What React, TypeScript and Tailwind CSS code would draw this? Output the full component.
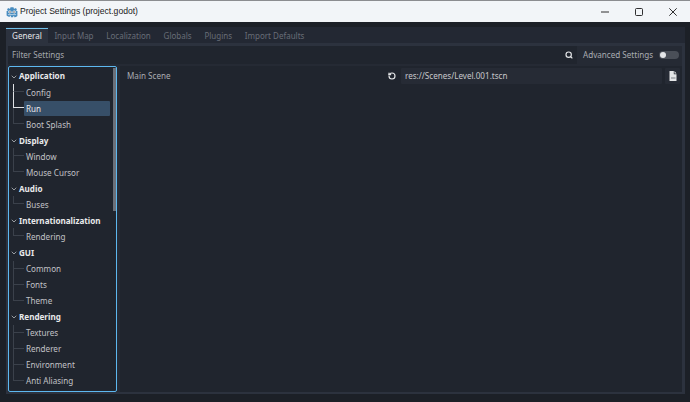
import { Search, RotateCcw, ChevronDown } from "lucide-react";

const font = { fontFamily: '"Noto Sans", sans-serif' };

const tabs = ["Input Map", "Localization", "Globals", "Plugins", "Import Defaults"];

type Row = { label: string; head?: boolean; branch?: "mid" | "end"; last?: boolean };

const rows: Row[] = [
  { label: "Application", head: true },
  { label: "Config", branch: "mid" },
  { label: "Run", branch: "end" },
  { label: "Boot Splash", last: true },
  { label: "Display", head: true },
  { label: "Window" },
  { label: "Mouse Cursor", last: true },
  { label: "Audio", head: true },
  { label: "Buses", last: true },
  { label: "Internationalization", head: true },
  { label: "Rendering", last: true },
  { label: "GUI", head: true },
  { label: "Common" },
  { label: "Fonts" },
  { label: "Theme", last: true },
  { label: "Rendering", head: true },
  { label: "Textures" },
  { label: "Renderer" },
  { label: "Environment" },
  { label: "Anti Aliasing", last: true },
];

const GodotLogo = () => (
  <svg width="12" height="12" viewBox="0 0 16 16">
    <path
      d="M6 1.500 5.600 3.200 4.400 3.600 3 2.600 1.400 4.200l.9 1.300-.3 1H.8v6.100c1 1.200 3 1.900 4.200 1.900v-1.600h1.500V15h3v-1.500H11v1.600c1.200 0 3.200-.7 4.200-1.900V6.500H14l-.3-1 .9-1.300L13 2.600l-1.400 1-1.200-.4L10 1.500Z"
      fill="#478cbf"
    />
    <circle cx="5" cy="8" r="1.900" fill="#fff" />
    <circle cx="11" cy="8" r="1.900" fill="#fff" />
    <circle cx="5.300" cy="8.100" r="1" fill="#414042" />
    <circle cx="10.700" cy="8.100" r="1" fill="#414042" />
    <rect x="7.300" y="7" width="1.400" height="2.400" rx="0.700" fill="#fff" />
    <path d="M2.500 11.500h11" stroke="#fff" strokeWidth="0.800" />
  </svg>
);

const MinimizeIcon = () => (
  <svg width="8" height="8" viewBox="0 0 8 8">
    <path d="M0 4h8" stroke="#1a1a1a" strokeWidth="0.900" />
  </svg>
);

const MaximizeIcon = () => (
  <svg width="8" height="8" viewBox="0 0 8 8" fill="none">
    <rect x="0.500" y="0.500" width="7" height="7" rx="1" stroke="#1a1a1a" strokeWidth="0.900" />
  </svg>
);

const CloseIcon = () => (
  <svg width="8" height="8" viewBox="0 0 8 8">
    <path d="M.3.300l7.400 7.400M7.700.300.3 7.700" stroke="#1a1a1a" strokeWidth="0.900" />
  </svg>
);

const FileIcon = () => (
  <svg width="8" height="10" viewBox="0 0 8 10">
    <path d="M.5 0H4.800v3.200H7.500V10h-7Z" fill="#e4e6e8" />
    <path d="M5.500 0l2 2.400h-2Z" fill="#e4e6e8" />
    <rect x="2" y="6.500" width="4.500" height="1" fill="#7d8087" />
  </svg>
);

const Connector = ({ row }: { row: Row }) => {
  const bright = "border-[#dfe1e4]";
  const faint = "border-[#3b414b]";
  return (
    <div className="flex h-full w-[11px] shrink-0 flex-col">
      <div
        className={`h-1/2 border-l ${row.branch ? bright : faint} border-b ${
          row.branch === "end" ? "border-b-[#dfe1e4]" : "border-b-[#3b414b]"
        }`}
      />
      {!row.last && <div className={`h-1/2 border-l ${row.branch === "mid" ? bright : faint}`} />}
    </div>
  );
};

export default function App() {
  return (
    <div style={font} className="flex h-[402px] w-[690px] flex-col overflow-hidden bg-[#1c2027] text-[8.100px] leading-none">
      <div className="flex h-[22px] shrink-0 items-center border-t border-[#8b8d90] bg-[#f2f5f8] pl-[6px]">
        <GodotLogo />
        <span className="ml-[2px] font-['Liberation_Sans',sans-serif] text-[8.600px] text-[#1a1a1a]">
          Project Settings (project.godot)
        </span>
        <div className="ml-auto flex items-center">
          <MinimizeIcon />
          <div className="w-[26px]" />
          <MaximizeIcon />
          <div className="w-[26px]" />
          <CloseIcon />
          <div className="w-[13px]" />
        </div>
      </div>

      <div className="flex min-h-0 flex-1 flex-col pb-[8px] pl-[6px] pr-[5px] pt-[5px]">
        <div className="flex h-[16px] shrink-0 items-stretch bg-[#232833] pt-[1px]">
          <div className="flex w-[42px] items-center justify-center border-t border-[#70bfe8] bg-[#2c323e] text-[#e6e7e9]">
            General
          </div>
          {tabs.map((t) => (
            <div key={t} className="flex items-center px-[6.400px] text-[8px] text-[#686d77]">
              {t}
            </div>
          ))}
        </div>

        <div className="flex min-h-0 flex-1 flex-col gap-[2px] border-b-2 border-l-2 border-r-[3px] border-t-[3px] border-[#2c323e] bg-[#252a34]">
          <div className="flex h-[18px] shrink-0 items-center">
            <div className="flex h-full w-[569px] items-center bg-[#20252e] pl-[4px] pr-[4px] text-[#a4a7ac]">
              Filter Settings
              <Search size={8} strokeWidth={3.500} className="ml-auto text-[#e4e6e8]" />
            </div>
            <span className="ml-[6px] whitespace-nowrap text-[#a9acb1]">Advanced Settings</span>
            <div className="ml-[6px] flex h-[8px] w-[20px] items-center rounded-full bg-[#4a4f58] pl-[1px]">
              <div className="h-[6px] w-[6px] rounded-full bg-[#e4e6e8]" />
            </div>
          </div>

          <div className="flex min-h-0 flex-1 gap-[3px]">
            <div className="flex w-[109px] shrink-0 rounded-[2px] border border-[#5db8f0] bg-[#20252e] py-[1px] pl-[1px]">
              <div className="min-w-0 flex-1">
                {rows.map((r, i) =>
                  r.head ? (
                    <div key={i} className="flex h-[16.050px] items-center pt-[1px] font-bold text-[#e8e9eb]">
                      <ChevronDown size={8} strokeWidth={2.500} className="mr-[1px] text-[#b0b3b8]" />
                      {r.label}
                    </div>
                  ) : (
                    <div key={i} className="flex h-[16.050px] items-center pl-[3px] text-[#c0c2c6]">
                      <Connector row={r} />
                      {r.branch === "end" ? (
                        <div className="mr-[3px] flex h-[15px] flex-1 items-center rounded-[1px] bg-[#374f68] pl-[2px] pt-[1px] text-[#e8e9eb]">
                          {r.label}
                        </div>
                      ) : (
                        <span className="pl-[2px] pt-[1px]">{r.label}</span>
                      )}
                    </div>
                  )
                )}
              </div>
              <div className="w-[3px] shrink-0">
                <div className="h-[143px] bg-[#6b7079]" />
              </div>
            </div>

            <div className="min-w-0 flex-1 bg-[#20252e] p-[2px]">
              <div className="flex h-[16px] items-center text-[#a9acb1]">
                <span className="ml-[5px] w-[261px] shrink-0 pt-[1px]">Main Scene</span>
                <RotateCcw size={8} strokeWidth={3.500} className="shrink-0 text-[#e4e6e8]" />
                <div className="ml-[5px] flex h-full w-[261px] shrink-0 items-center rounded-[1px] bg-[#262b35] pl-[4px] pt-[1px] text-[#c6c8cb]">
                  res://Scenes/Level.001.tscn
                </div>
                <div className="ml-[3px] flex h-full w-[15px] shrink-0 items-center justify-center rounded-[1px] bg-[#262b35]">
                  <FileIcon />
                </div>
              </div>
            </div>
          </div>
        </div>
      </div>
    </div>
  );
}
